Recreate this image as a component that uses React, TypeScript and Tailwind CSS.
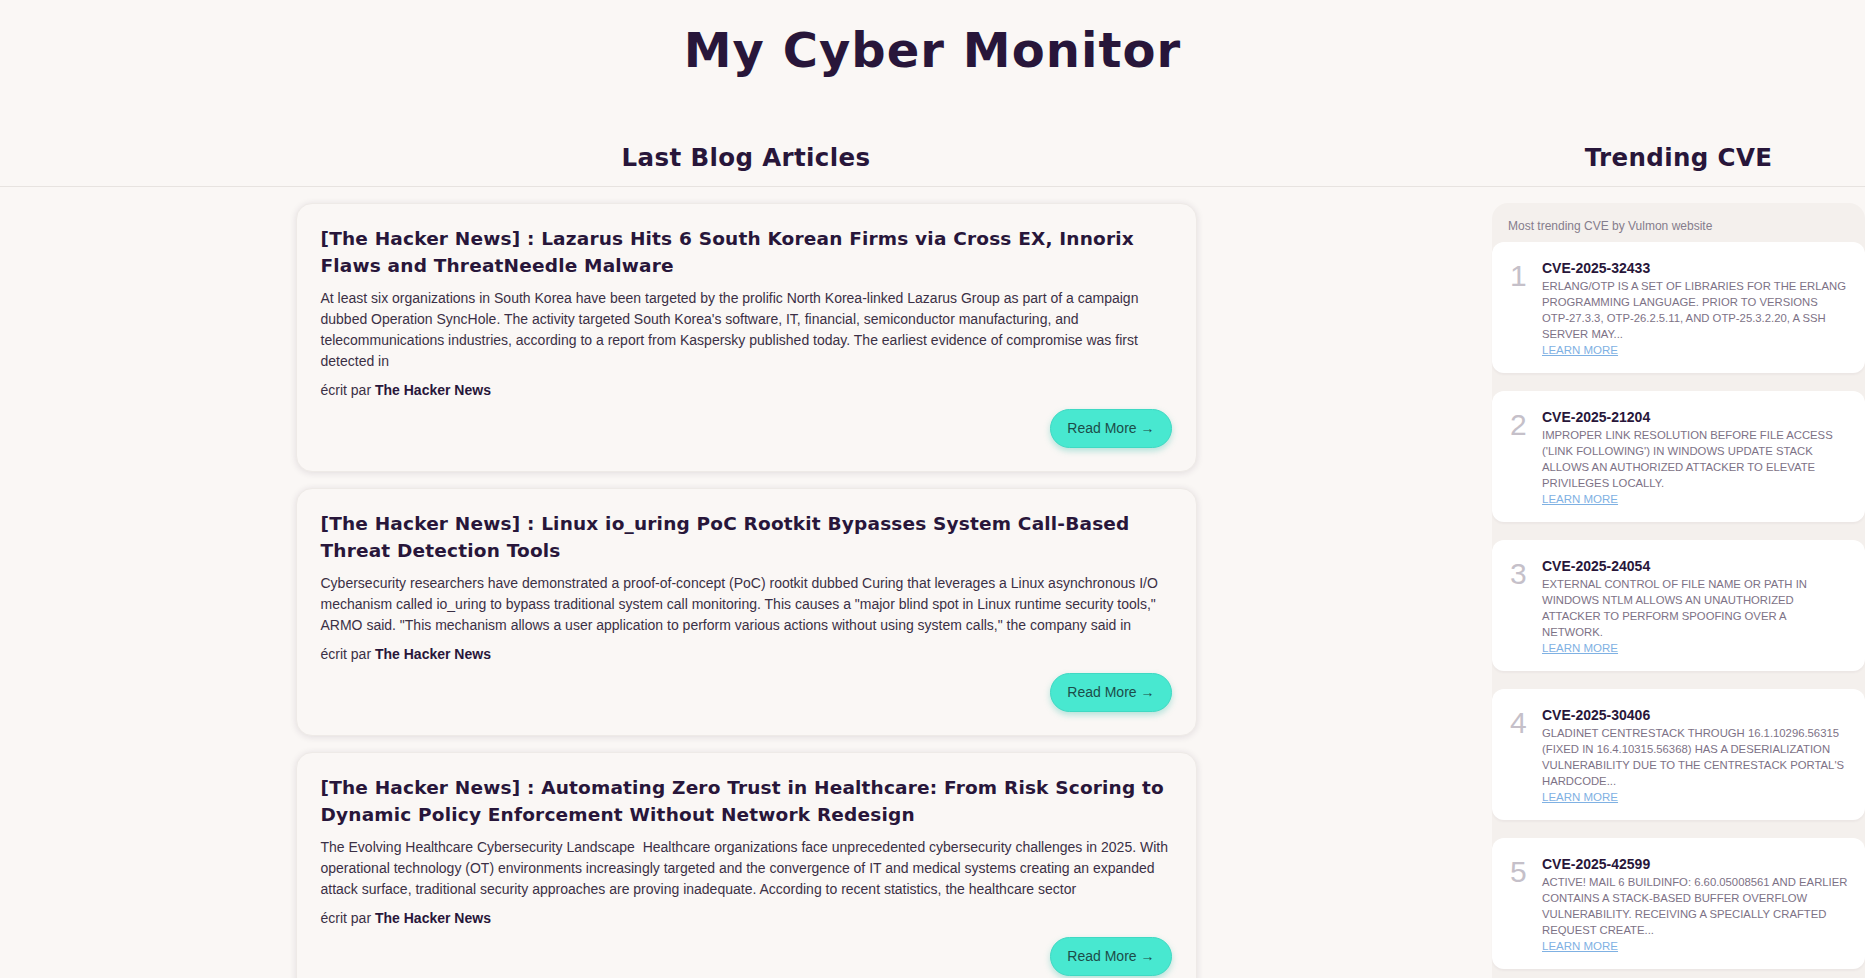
import React from "react";

type Article = {
  title: string;
  summary: string;
  author: string;
};

type Cve = {
  id: string;
  description: string;
};

const articles: Article[] = [
  {
    title:
      "[The Hacker News] : Lazarus Hits 6 South Korean Firms via Cross EX, Innorix Flaws and ThreatNeedle Malware",
    summary:
      "At least six organizations in South Korea have been targeted by the prolific North Korea-linked Lazarus Group as part of a campaign dubbed Operation SyncHole. The activity targeted South Korea's software, IT, financial, semiconductor manufacturing, and telecommunications industries, according to a report from Kaspersky published today. The earliest evidence of compromise was first detected in",
    author: "The Hacker News",
  },
  {
    title:
      "[The Hacker News] : Linux io_uring PoC Rootkit Bypasses System Call-Based Threat Detection Tools",
    summary:
      'Cybersecurity researchers have demonstrated a proof-of-concept (PoC) rootkit dubbed Curing that leverages a Linux asynchronous I/O mechanism called io_uring to bypass traditional system call monitoring. This causes a "major blind spot in Linux runtime security tools," ARMO said. "This mechanism allows a user application to perform various actions without using system calls," the company said in',
    author: "The Hacker News",
  },
  {
    title:
      "[The Hacker News] : Automating Zero Trust in Healthcare: From Risk Scoring to Dynamic Policy Enforcement Without Network Redesign",
    summary:
      "The Evolving Healthcare Cybersecurity Landscape\u00a0 Healthcare organizations face unprecedented cybersecurity challenges in 2025. With operational technology (OT) environments increasingly targeted and the convergence of IT and medical systems creating an expanded attack surface, traditional security approaches are proving inadequate. According to recent statistics, the healthcare sector",
    author: "The Hacker News",
  },
];

const cves: Cve[] = [
  {
    id: "CVE-2025-32433",
    description:
      "Erlang/OTP is a set of libraries for the Erlang programming language. Prior to versions OTP-27.3.3, OTP-26.2.5.11, and OTP-25.3.2.20, a SSH server may...",
  },
  {
    id: "CVE-2025-21204",
    description:
      "Improper link resolution before file access ('link following') in Windows Update Stack allows an authorized attacker to elevate privileges locally.",
  },
  {
    id: "CVE-2025-24054",
    description:
      "External control of file name or path in Windows NTLM allows an unauthorized attacker to perform spoofing over a network.",
  },
  {
    id: "CVE-2025-30406",
    description:
      "Gladinet CentreStack through 16.1.10296.56315 (fixed in 16.4.10315.56368) has a deserialization vulnerability due to the CentreStack portal's hardcode...",
  },
  {
    id: "CVE-2025-42599",
    description:
      "Active! mail 6 BuildInfo: 6.60.05008561 and earlier contains a stack-based buffer overflow vulnerability. Receiving a specially crafted request create...",
  },
];

const display = "font-['DejaVu_Sans',sans-serif]";
const body = "font-['Liberation_Sans',Arial,sans-serif]";

// keep hyphenated tokens (OTP-27.3.3, stack-based) on one line
function NoBreakHyphens({ text }: { text: string }) {
  const words = text.split(" ");
  return (
    <>
      {words.map((w, i) => (
        <React.Fragment key={i}>
          {w.includes("-") ? <span className="whitespace-nowrap">{w}</span> : w}
          {i < words.length - 1 ? " " : ""}
        </React.Fragment>
      ))}
    </>
  );
}

function ArticleCard({ article }: { article: Article }) {
  return (
    <article className="rounded-2xl border border-[#eeeae7] bg-[#faf7f5] px-6 pt-[21px] pb-[23px] shadow-[0_1px_7px_rgba(40,22,58,0.12)]">
      <h3
        className={`${display} text-[18.5px] font-bold leading-[27px] tracking-[0.01em] text-[#28163a]`}
      >
        {article.title}
      </h3>
      <p className={`${body} mt-[9px] text-[14px] leading-[21px] text-[#3b3045]`}>
        {article.summary}
      </p>
      <p className={`${body} mt-2 text-[14px] leading-[21px] text-[#3b3045]`}>
        écrit par <span className="font-bold text-[#28163a]">{article.author}</span>
      </p>
      <div className="mt-2 flex justify-end">
        <button
          className={`${body} h-[39px] rounded-full border border-[#3fd9c3] bg-[#48e8d0] px-[16px] text-[14px] text-[#1c4d49] shadow-[0_3px_6px_rgba(50,190,170,0.35)]`}
        >
          Read More →
        </button>
      </div>
    </article>
  );
}

function CveCard({ cve, rank }: { cve: Cve; rank: number }) {
  return (
    <div className="flex rounded-xl bg-white pt-4 pr-[15px] pb-[15px] pl-[18px] shadow-[0_2px_2px_rgba(40,22,58,0.04)]">
      <span
        className={`${body} w-[32px] shrink-0 pt-[3px] text-[30px] font-light leading-none text-[#c5c0c9]`}
      >
        {rank}
      </span>
      <div className="min-w-0 flex-1">
        <p className={`${body} text-[14px] font-bold leading-[20px] text-[#28163a]`}>
          {cve.id}
        </p>
        <p className={`${body} text-[11.3px] uppercase leading-[16px] text-[#7d7286]`}>
          <NoBreakHyphens text={cve.description} />
        </p>
        <a
          href="#"
          className={`${body} block text-[11.5px] uppercase leading-[16px] text-[#7fb1e3] underline`}
        >
          Learn More
        </a>
      </div>
    </div>
  );
}

export default function App() {
  return (
    <div className="min-h-screen bg-[#faf7f5]">
      <header className="pt-[22px] pb-[65px] text-center">
        <h1
          className={`${display} text-[48px] font-bold leading-[56px] tracking-[0.022em] text-[#28163a]`}
        >
          My Cyber Monitor
        </h1>
      </header>

      <div className="grid grid-cols-[1492px_1fr] border-b border-[#e7e3e0] pb-[13px]">
        <h2
          className={`${display} text-center text-[24.5px] font-bold leading-[30px] tracking-[0.015em] text-[#28163a]`}
        >
          Last Blog Articles
        </h2>
        <h2
          className={`${display} text-center text-[24.5px] font-bold leading-[30px] tracking-[0.015em] text-[#28163a]`}
        >
          Trending CVE
        </h2>
      </div>

      <div className="grid grid-cols-[1492px_1fr] pt-4">
        <main className="mx-auto flex w-[901px] flex-col gap-4 pb-8">
          {articles.map((article) => (
            <ArticleCard key={article.title} article={article} />
          ))}
        </main>

        <aside className="self-start rounded-tl-2xl rounded-tr-2xl bg-[#f4f0ed] pt-[14px] pb-4">
          <p className={`${body} mb-[7px] px-4 text-[12px] leading-[18px] text-[#857d8c]`}>
            Most trending CVE by Vulmon website
          </p>
          <div className="flex flex-col gap-[18px]">
            {cves.map((cve, i) => (
              <CveCard key={cve.id} cve={cve} rank={i + 1} />
            ))}
          </div>
        </aside>
      </div>
    </div>
  );
}
